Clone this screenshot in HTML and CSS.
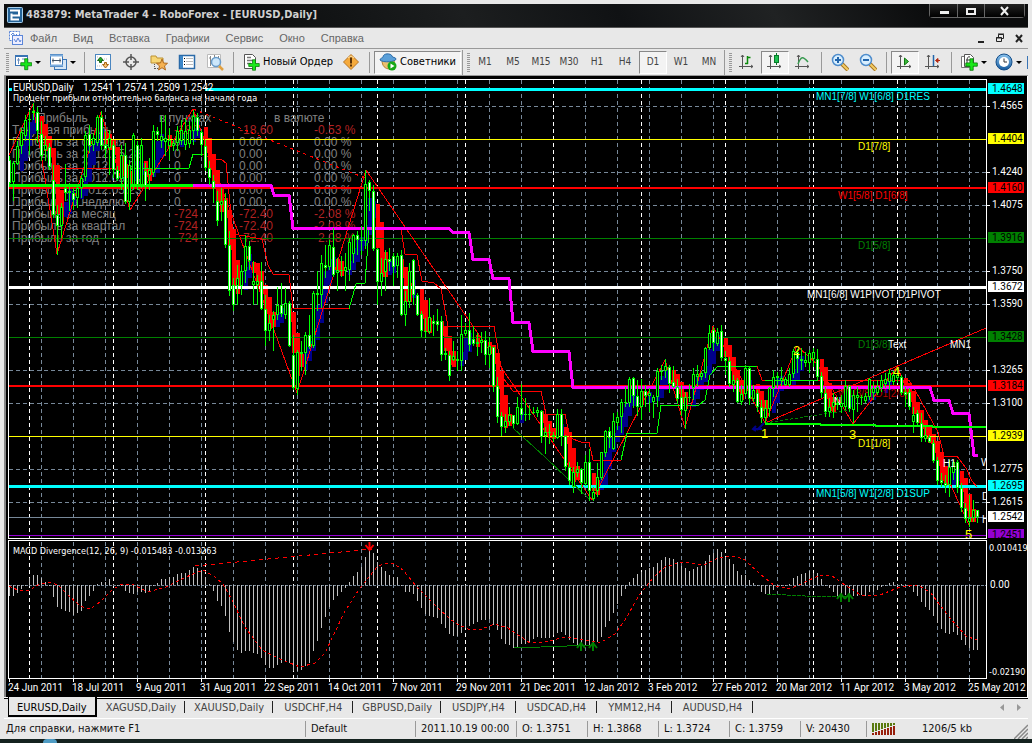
FILE: index.html
```html
<!DOCTYPE html>
<html lang="ru">
<head>
<meta charset="utf-8">
<title>483879: MetaTrader 4 - RoboForex - [EURUSD,Daily]</title>
<link rel="stylesheet" href="styles.css">
</head>
<body>
<svg class="defs" width="0" height="0" aria-hidden="true">
  <defs>
    <g id="plus"><path d="M6 1h4v5h5v4h-5v5H6v-5H1V6h5z" fill="#18e818" stroke="#087808"/></g>
    <g id="axes"><path d="M4.500 2v14M1 13.500h14M3 4l1.500-2L6 4M13 12l2 1.500-2 1.500" fill="none" stroke="#555"/></g>
    <linearGradient id="blue" x2="0" y2="1"><stop stop-color="#8cc4ee"/><stop offset="1" stop-color="#155a9e"/></linearGradient>
  </defs>
</svg>
<div class="window">
  <header class="titlebar">
    <svg class="logo" viewBox="0 0 16 16"><rect x=".5" y=".5" width="15" height="15" rx="1" fill="#246398" stroke="#a8d0ec"/><path d="M3 3.500h9v5H8M4.500 6.500v6H12M4 8.500h4" fill="none" stroke="#fff" stroke-width="2"/></svg>
    <h1>483879: MetaTrader 4 - RoboForex - [EURUSD,Daily]</h1>
    <div class="winbuttons">
      <button aria-label="Свернуть"><svg width="12" height="10"><rect x="2" y="5" width="9" height="3" fill="#eee"/></svg></button>
      <button aria-label="Развернуть"><svg width="12" height="10"><path d="M2 3h8v5H2z" fill="none" stroke="#eee" stroke-width="2"/></svg></button>
      <button aria-label="Закрыть" class="wide"><svg width="12" height="10"><path d="M2 1l7 8M9 1L2 9" stroke="#eee" stroke-width="2"/></svg></button>
    </div>
  </header>

  <nav class="menubar">
    <svg class="menuicon" viewBox="0 0 16 16"><rect x="1.500" y="1.500" width="10" height="9" fill="#fff" stroke="#5b86d8" stroke-dasharray="2 1"/><path d="M3 5l2-2 2 3 2-2" fill="none" stroke="#5b86d8"/><rect x="4.500" y="5.500" width="10" height="9" fill="#eef" stroke="#5b86d8"/><path d="M6 9l2 3 2-4 2 4 1-2" fill="none" stroke="#5b86d8"/></svg>
    <button>Файл</button><button>Вид</button><button>Вставка</button><button>Графики</button><button>Сервис</button><button>Окно</button><button>Справка</button>
    <div class="childbuttons">
      <button aria-label="Свернуть окно"><svg width="10" height="10"><rect x="2" y="8" width="6" height="2" fill="#222"/></svg></button>
      <button aria-label="Восстановить окно"><svg width="10" height="10"><path d="M3.500 4V1.500h5v4H7M3 1h6M1 5h6M1.500 4.500h5v4h-5z" fill="none" stroke="#222"/></svg></button>
      <button aria-label="Закрыть окно"><svg width="10" height="10"><path d="M2 2l6 7M8 2L2 9" stroke="#222" stroke-width="2"/></svg></button>
    </div>
  </nav>

  <div class="toolbar">
    <span class="grip"></span>
    <button class="drop" aria-label="Новый график"><svg viewBox="0 0 18 18"><rect x="1.500" y="2.500" width="12" height="10" fill="#fff" stroke="#3974b5"/><path d="M1 3h13" stroke="#3974b5" stroke-width="2"/><path d="M4.500 5v6M3 7h3M8 6h3" stroke="#6a8dbb"/><use href="#plus" transform="translate(6 5) scale(.78)"/></svg><i class="caret"></i></button>
    <button class="drop" aria-label="Профили"><svg viewBox="0 0 18 18"><rect x="5.500" y="6.500" width="12" height="10" fill="#d6e6f5" stroke="#3974b5"/><rect x="1.500" y="1.500" width="12" height="12" fill="#fff" stroke="#3974b5"/><path d="M1 2.500h13M1 12.500h13" stroke="#7faede" stroke-width="2"/><path d="M3 7.500h9M4 5.500v4M11 5.500v4" stroke="#456"/></svg><i class="caret"></i></button>
    <span class="sep"></span>
    <button aria-label="Обзор рынка"><svg viewBox="0 0 18 18"><rect x="1.500" y="1.500" width="15" height="15" fill="#fff" stroke="#4a86c0"/><path d="M3 4h2M10 6h4M3 13h5" stroke="#bbb" stroke-dasharray="1 1"/><path d="M3.500 7.500L6.500 4l3 3.500h-2v2h-2v-2z" fill="#27a327" stroke="#176717"/><path d="M8.500 11.500h2v-2h2v2h2l-3 3.500z" fill="#f8c070" stroke="#a66411"/></svg></button>
    <button aria-label="Окно данных"><svg viewBox="0 0 18 18"><circle cx="9" cy="9" r="5" fill="none" stroke="#555" stroke-width="1.500"/><path d="M9 1v6M9 11v6M1 9h6M11 9h6" stroke="#555" stroke-width="1.500"/></svg></button>
    <button aria-label="Навигатор"><svg viewBox="0 0 18 18"><path d="M1 3h5l1 2h6v5H1z" fill="#f7d674" stroke="#bd9233"/><path d="M4.500 11v6M5 15.500h3" stroke="#555" stroke-dasharray="1 1"/><path d="M12 6l1.500 4 4 .3-3 2.600 1 4.100-3.500-2.300L8.500 17l1-4.100-3-2.600 4-.3z" fill="#f6b252" stroke="#b06a20"/></svg></button>
    <button aria-label="Терминал"><svg viewBox="0 0 18 18"><rect x="1.500" y="2.500" width="15" height="13" fill="#fff" stroke="#2a6aa8" stroke-width="1.500"/><path d="M3.500 3v12" stroke="#3b86c8" stroke-width="3"/><path d="M8 5.500h7M8 8.500h7M8 11.500h7" stroke="#bbb"/><path d="M6 5.500h1M6 8.500h1M6 11.500h1" stroke="#000"/></svg></button>
    <button aria-label="Тестер стратегий"><svg viewBox="0 0 18 18"><path d="M1.500 1.500h13v13h-13z" fill="#fff" stroke="#bbb"/><path d="M4.500 3v10M3 5h2M8.500 2v4M12.500 3v5" stroke="#888"/><circle cx="10" cy="9" r="4.500" fill="#cce7fb" stroke="#689cca" stroke-width="1.500"/><path d="M13 13l4 4" stroke="#e0a040" stroke-width="2.500"/></svg></button>
    <span class="sep"></span>
    <button class="labelled"><svg viewBox="0 0 18 18"><path d="M2.500 1.500h8l3 3v11h-11z" fill="#fff" stroke="#555"/><path d="M5 4.500h4M5 7.500h6M5 10.500h4" stroke="#777" stroke-width="1.500"/><use href="#plus" transform="translate(6 6) scale(.75)"/></svg>Новый Ордер</button>
    <button aria-label="Редактор"><svg viewBox="0 0 18 18"><path d="M9 1.500L16.500 9 9 16.500 1.500 9z" fill="#f5aa3c" stroke="#b87422"/><path d="M6 5l3-2 3 2" stroke="#ffe0a0" fill="none"/><path d="M9 4.500v6M9 11.500v2" stroke="#5a3208" stroke-width="2"/></svg></button>
    <span class="sep"></span>
    <button class="labelled pressed" aria-pressed="true"><svg viewBox="0 0 18 18"><path d="M3 7c0 6 3 9 8 9s5-6 4-9z" fill="#edc06f" stroke="#b58030"/><path d="M1 7c0-2 3-2 3-3 0-4 8-4 9-1 0 2 4 1 4 3 0 3-13 4-16 1z" fill="#5a9fd8" stroke="#2c6ca8"/><circle cx="13" cy="13" r="4.500" fill="#16a816"/><path d="M11.500 10.500v5l4-2.500z" fill="#fff"/></svg>Советники</button>
    <span class="sep edge"></span><span class="grip"></span>
    <button class="tf">M1</button><button class="tf">M5</button><button class="tf">M15</button><button class="tf">M30</button><button class="tf">H1</button><button class="tf">H4</button><button class="tf pressed" aria-pressed="true">D1</button><button class="tf">W1</button><button class="tf">MN</button>
    <span class="sep edge"></span><span class="grip"></span>
    <button aria-label="Бары"><svg viewBox="0 0 18 18"><use href="#axes"/><path d="M9.500 3v8M9.500 4.500h3M7 10.500h3" stroke="#0a8a0a" stroke-width="1.500"/></svg></button>
    <button class="pressed" aria-pressed="true" aria-label="Свечи"><svg viewBox="0 0 18 18"><use href="#axes"/><path d="M10.500 0v12" stroke="#087a2a"/><rect x="8.500" y="2.500" width="4" height="7" fill="#1fc050" stroke="#087a2a"/></svg></button>
    <button aria-label="Линия"><svg viewBox="0 0 18 18"><use href="#axes"/><path d="M4 11C7 3 9 3 14 9" fill="none" stroke="#389a50" stroke-width="1.500"/></svg></button>
    <span class="sep"></span>
    <button aria-label="Приблизить"><svg viewBox="0 0 18 18"><path d="M11 11l6 6" stroke="#a87520" stroke-width="4"/><path d="M11 11l6 6" stroke="#f3cc65" stroke-width="2"/><circle cx="7" cy="7" r="5.500" fill="#d9efff" stroke="#4f8dcc" stroke-width="1.500"/><path d="M4 7h6M7 4v6" stroke="#2366ac" stroke-width="2"/></svg></button>
    <button aria-label="Отдалить"><svg viewBox="0 0 18 18"><path d="M11 11l6 6" stroke="#a87520" stroke-width="4"/><path d="M11 11l6 6" stroke="#f3cc65" stroke-width="2"/><circle cx="7" cy="7" r="5.500" fill="#d9efff" stroke="#4f8dcc" stroke-width="1.500"/><path d="M4 7h6" stroke="#2366ac" stroke-width="2"/></svg></button>
    <span class="sep"></span>
    <button class="pressed" aria-pressed="true" aria-label="Автопрокрутка"><svg viewBox="0 0 18 18"><use href="#axes"/><path d="M8.500 5v7l4-3.500z" fill="#3cb83c" stroke="#107a10"/></svg></button>
    <button aria-label="Сдвиг графика"><svg viewBox="0 0 18 18"><use href="#axes"/><path d="M9.500 2v11" stroke="#2366ac" stroke-width="1.500"/><path d="M16 7.500h-3M14 5.500l-2.500 2 2.500 2z" fill="#b32810" stroke="#b32810"/></svg></button>
    <span class="sep"></span>
    <button class="drop" aria-label="Индикаторы"><svg viewBox="0 0 18 18"><path d="M1.500 3.500h8v11h-8z" fill="#fff" stroke="#777"/><path d="M4.500 1.500h6l3 3v9h-9z" fill="#fff" stroke="#555"/><path d="M10 4c-3-1-3 2-3 7M6 7h4" fill="none" stroke="#333"/><use href="#plus" transform="translate(5 5) scale(.82)"/></svg><i class="caret"></i></button>
    <button class="drop" aria-label="Периоды"><svg viewBox="0 0 18 18"><circle cx="9" cy="9" r="8" fill="url(#blue)" stroke="#134d89"/><circle cx="9" cy="9" r="5" fill="#fff"/><path d="M9 5.500V9h3" fill="none" stroke="#333"/></svg><i class="caret"></i></button>
    <span class="more"></span>
  </div>

  <main class="chart">
    <svg id="chart" viewBox="4 76 1024 621" role="img" aria-label="График EURUSD, Daily"></svg>
  </main>

  <div class="tabs" role="tablist">
    <button role="tab" class="active" aria-selected="true">EURUSD,Daily</button><button role="tab">XAGUSD,Daily</button><button role="tab">XAUUSD,Daily</button><button role="tab" class="short">USDCHF,H4</button><button role="tab">GBPUSD,Daily</button><button role="tab" class="short">USDJPY,H4</button><button role="tab" class="short">USDCAD,H4</button><button role="tab" class="short">YMM12,H4</button><button role="tab" class="short">AUDUSD,H4</button>
    <div class="scrollers">
      <button aria-label="Назад"><svg width="5" height="7"><path d="M4 0v7L0 3.500z" fill="#999"/></svg></button>
      <button aria-label="Вперёд"><svg width="5" height="7"><path d="M0 0v7l4-3.500z" fill="#999"/></svg></button>
    </div>
  </div>

  <footer class="status">
    <span class="help">Для справки, нажмите F1</span>
    <span class="profile">Default</span>
    <span class="date">2011.10.19 00:00</span>
    <span class="val">O: 1.3751</span>
    <span class="val">H: 1.3868</span>
    <span class="val">L: 1.3724</span>
    <span class="val">C: 1.3759</span>
    <span class="vol">V: 20430</span>
    <span class="net"><svg width="24" height="13" id="net"></svg>1206/5 kb</span>
    <svg class="sizer" width="14" height="16"><path d="M0 16L14 2M4 16L14 6M8 16l6-6M12 16l2-2" stroke="#888" stroke-width="1.500"/></svg>
  </footer>
</div>
<div class="desktop"><span></span></div>
<script src="chart.js"></script>
</body>
</html>
```

FILE: styles.css
```css
* { box-sizing: border-box; }
body {
  margin: 0;
  background: #e8e8e8;
  font: 11px/14px "DejaVu Sans Condensed", "DejaVu Sans", sans-serif;
  color: #111;
}
.defs { position: absolute; }
button {
  font: inherit;
  color: inherit;
  background: none;
  border: 0;
  padding: 0;
  display: flex;
  align-items: center;
  justify-content: center;
}
svg { flex: none; }
.window { margin: 4px 4px 0; }

.titlebar {
  display: flex;
  align-items: center;
  height: 24px;
  padding: 0 3px 1px;
  background: linear-gradient(60deg, #0c0e0f 25%, #1c1e1f 45%, #101214 60%, #202223 75%, #0b0c0d 90%);
  border-bottom: 1px solid #555;
}
.logo { width: 16px; height: 16px; }
.titlebar h1 {
  margin: 0 0 0 3px;
  font: bold 11px/16px "DejaVu Sans Condensed", sans-serif;
  color: #d0d0d0;
  white-space: nowrap;
}
.winbuttons {
  display: flex;
  align-self: flex-start;
  margin-left: auto;
  border: 1px solid #666;
  border-top: 0;
  border-radius: 0 0 4px 4px;
}
.winbuttons button {
  width: 27px;
  height: 13px;
  background: linear-gradient(#222, #000);
}
.winbuttons button + button { border-left: 1px solid #666; }
.winbuttons .wide { width: 40px; }

.menubar {
  display: flex;
  align-items: center;
  height: 21px;
  padding-left: 4px;
  border-bottom: 1px solid #999;
  font: 11px/16px "Liberation Sans", sans-serif;
  color: #666;
}
.menuicon { width: 16px; height: 16px; margin-right: 6px; }
.menubar > button { margin-right: 16px; }
.childbuttons { display: flex; gap: 9px; margin: 0 4px 0 auto; }

.toolbar {
  display: flex;
  align-items: center;
  height: 27px;
  border-bottom: 1px solid #999;
  overflow: hidden;
}
.toolbar button { width: 28px; height: 23px; flex: none; }
.toolbar svg { width: 18px; height: 18px; }
.toolbar .drop { width: 35px; gap: 3px; }
.toolbar .tf { color: #444; font-size: 10px; }
.toolbar .labelled { width: auto; padding: 0 4px; gap: 3px; color: #000; }
.toolbar .pressed {
  border: 1px solid #888;
  border-right-color: #fff;
  border-bottom-color: #fff;
  background: #f3f3f3;
}
.caret { border: 3px solid transparent; border-top-color: #000; border-bottom: 0; }
.sep { width: 1px; height: 21px; margin: 0 4px; background: #999; flex: none; }
.sep.edge { height: 25px; margin: 0 2px 0 1px; }
.grip {
  width: 3px;
  height: 19px;
  margin: 0 1px 0 2px;
  flex: none;
  background: repeating-linear-gradient(#999 0 1px, #e8e8e8 1px 2px);
}
.more { width: 1px; height: 13px; margin-left: auto; background: #3974b5; flex: none; }

.chart { background: #000; }
.chart svg { display: block; width: 100%; height: auto; }
.chart text { font-family: Roboto, sans-serif; font-size: 10px; }
.chart .small { font-family: "DejaVu Sans Condensed", sans-serif; font-size: 9px; }
.chart .ar { font-family: "Liberation Sans", sans-serif; font-size: 10px; }
.chart .profit { font-family: "Liberation Sans", sans-serif; font-size: 12px; }
.chart .num { font-family: "Liberation Sans", sans-serif; font-size: 13px; }

.tabs {
  display: flex;
  height: 21px;
  padding-left: 4px;
  color: #444;
  background: linear-gradient(#fff 0 1px, #000 1px 2px, #e8e8e8 2px);
}
.tabs > button {
  position: relative;
  height: 20px;
  padding: 2px 9px 0;
}
.tabs > .short { padding: 2px 11px 0; }
.tabs > button:not(.active)::after {
  content: "";
  position: absolute;
  right: 0;
  top: 4px;
  height: 12px;
  border-right: 1px solid #222;
}
.tabs > .active {
  color: #000;
  border: solid #000;
  border-width: 0 2px 2px 1px;
  padding: 3px 8px 0;
  background: #e8e8e8;
}
.scrollers { display: flex; gap: 12px; margin: 0 6px 0 auto; }

.status {
  display: flex;
  align-items: center;
  height: 21px;
  border-top: 1px solid #fff;
  white-space: nowrap;
}
.status span { padding-left: 5px; line-height: 16px; }
.status span + span { border-left: 1px solid #999; }
.status .help { flex: 1; padding-left: 2px; }
.status .profile { width: 110px; }
.status .date { width: 101px; }
.status .val { width: 71px; }
.status .vol { width: 66px; }
.status .net { display: flex; align-items: center; gap: 26px; width: 148px; }
.status .sizer { align-self: flex-end; }
.desktop { height: 4px; background: #14221f; }
.desktop span { display: block; width: 14px; height: 4px; margin-left: 43px; background: #4f9cc4; border-radius: 7px 7px 0 0; }
```

FILE: chart.js
```js
const NS = 'http://www.w3.org/2000/svg';
const svg = document.getElementById('chart');
let layer = svg;

function add(tag, attrs, text) {
  const el = document.createElementNS(NS, tag);
  for (const k in attrs) el.setAttribute(k, attrs[k]);
  if (text !== undefined) el.textContent = text;
  layer.appendChild(el);
  return el;
}
const rect = (x, y, width, height, fill) => add('rect', { x, y, width, height, fill });
const line = (points, stroke, w = 1, dash) => add('polyline', {
  points, stroke, fill: 'none', 'stroke-width': w,
  ...(dash ? { 'stroke-dasharray': dash } : {}), 'shape-rendering': 'crispEdges'
});
const text = (x, y, s, fill = '#fff', cls = '') => add('text', { x, y, fill, class: cls }, s);

/* candles: high, body top, body bottom, low in thirds of a pixel below `top`; d marks a falling bar */
const parts = [
  [0, 78, `235 245 315 325 d|248 255 312 370|188 203 258 262|150 163 205 228|110 125 175 190|95 122 125 230|75 100 105 125|88 102 160 195 d|130 168 235 248 d|175 200 215 250|195 208 268 275 d|262 305 410 420 d|380 412 445 530 d|375 388 445 480|258 330 345 370 d|315 340 345 400|330 345 365 395 d|320 330 360 390|290 300 330 360|160 172 298 310|140 168 205 225 d|165 180 200 220|112 118 195 205|100 117 205 215 d|160 200 212 240 d|155 180 210 290|190 200 275 300 d|265 275 302 310 d|200 232 302 335|195 232 372 378 d|245 260 372 395|165 172 320 335|188 202 320 335 d|180 200 320 330|255 280 325 370 d|240 275 290 335|140 158 285 298|148 160 172 190 d|115 175 190 210|110 180 192 235|150 185 205 245|185 195 205 220|145 160 195 220|125 155 190 200|120 158 200 215|130 155 198 210|95 115 160 200|105 118 160 175 d|155 162 200 235 d|185 205 270 280 d|250 270 300 320 d|290 310 330 375 d|340 370 430 445 d|330 370 380 430|345 365 500 510 d|460 500 640 655 d|600 620 680 700 d|560 600 625 680|560 580 625 650|470 505 580 615|490 505 550 575 d`],
  [61, 78, `550 608 620 680|590 610 620 680|552 610 692 695 d|650 692 758 805 d|710 735 758 790|700 710 725 818|628 682 712 725|615 680 708 718 d|630 675 710 722|670 676 803 808 d|770 830 930 935 d|815 822 932 950|790 822 828 880|762 770 825 890|712 772 808 812 d|640 645 803 810|580 645 652 700|530 555 650 690|500 560 570 600 d|485 502 568 575|450 508 590 598 d|540 575 585 640|535 575 580 598|525 566 578 640|480 492 575 610|468 472 528 555|460 470 485 530 d|445 485 490 530|275 317 490 512|305 312 340 400 d|322 338 512 520 d|510 514 612 680 d|540 585 612 655|515 542 582 640|510 542 552 580 d|525 535 567 625 d|525 535 565 600|515 532 710 715 d|640 670 712 745|555 580 672 690|542 545 650 680 d|645 652 710 715 d|700 708 758 778 d|720 758 762 780|660 718 762 768|712 728 738 775 d|692 730 742 758 d|715 730 830 850 d|810 825 832 845|820 832 895 910 d|790 835 845 850|820 844 848 878|712 768 848 880|735 757 768 775|705 757 800 820 d|745 782 797 803 d|765 792 797 835`],
  [118, 300, `95 120 130 160|92 120 165 195 d|110 138 165 205|140 142 258 275 d|230 258 350 370 d|335 348 382 408 d|342 362 382 400|320 345 365 378|345 346 373 383 d|290 320 373 376|252 325 345 360 d|295 342 345 362|315 342 346 360|320 336 340 342|322 330 338 350|330 332 410 430 d|382 395 408 462|372 396 399 432|395 405 412 425 d|328 343 415 418|328 343 410 438 d|405 408 502 512 d|485 502 543 556 d|500 515 560 578|485 507 518 530|505 507 550 582 d|465 487 553 558|448 487 572 602 d|560 577 597 603|490 532 573 590|455 457 535 540|390 392 458 470|380 392 415 445 d|340 364 448 450|335 352 368 390|298 307 352 400|262 305 308 320|230 238 308 320|230 235 287 325 d|240 287 322 348 d|238 274 322 360|255 274 287 320 d|265 278 288 335|285 292 305 355|205 213 292 320|195 212 216 240|178 198 214 235|195 200 252 280 d|198 247 262 265 d|238 260 296 312 d|255 292 330 348 d|275 292 333 388|252 290 294 305|205 222 265 300|195 223 230 260|212 220 232 240|140 145 220 235|75 100 145 150|80 90 130 152 d|85 95 133 138|75 93 175 183 d|152 175 183 225 d|170 183 253 262 d`],
  [181, 310, `195 210 225 245|205 210 275 280 d|225 253 275 285|165 175 253 258|172 175 268 285 d|225 240 268 275|240 250 290 305 d|270 290 325 340 d|270 295 325 340|230 233 297 320|180 200 233 260|185 198 205 235|170 205 212 228|200 208 225 228|175 192 225 230|118 122 192 205|118 125 148 190 d|115 148 152 180|125 150 160 170|120 130 160 190|115 125 148 170|118 148 200 210 d|185 198 248 265 d|230 250 305 320 d|265 290 305 320|250 275 290 325|260 280 285 300|255 278 290 310|210 228 290 300|225 228 298 305 d|240 255 300 340|230 255 265 305|255 260 265 285|250 258 272 280|205 208 262 270|215 235 250 270|210 232 248 255|195 210 235 245|190 208 222 235|178 190 215 240|182 195 215 225|170 195 205 220|195 200 248 255 d|230 245 255 290 d|235 245 292 300 d|290 315 335 370|300 310 340 350 d|310 340 385 395 d|350 375 388 395|375 380 395 400 d|390 400 452 460 d|440 450 512 525 d|490 510 520 530 d|495 520 528 550 d|450 470 525 560|450 455 490 510|450 455 535 550 d|520 535 595 605 d|580 595 628 640 d|555 625 635 650|570 600 625 635|600 600 622 640 d`]
];
const bars = [];
for (const [start, top, data] of parts) {
  data.split('|').forEach((s, k) => {
    const f = s.split(' ');
    const [h, t, b, l] = f.slice(0, 4).map(v => Math.round(top + v / 3));
    bars[start + k] = { x: 9 + 4 * (start + k), h, t, b, l, down: f[4] === 'd' };
  });
}

/* grid */
rect(4, 76, 1024, 621, '#000');
rect(4, 76, 2, 621, '#888');
const GREY = '#778899';
const GRID_DASH = '4 3';
for (let x = 41.5; x < 986; x += 32) {
  line(`${x},80 ${x},538`, GREY, 1, GRID_DASH);
  line(`${x},542 ${x},678`, GREY, 1, GRID_DASH);
}
[106.5, 172.5, 205.5, 271.5, 304.5, 370.5, 403.5, 469.5, 502.5].forEach(y => line(`9,${y} 986,${y}`, GREY, 1, GRID_DASH));
[29.5, 113.5, 205.5, 293.5, 377.5, 465.5, 553.5, 641.5, 725.5, 813.5, 897.5].forEach(x => {
  line(`${x},80 ${x},538`, '#fff', 1, GRID_DASH);
  line(`${x},542 ${x},678`, '#fff', 1, GRID_DASH);
});

/* profit table */
const DIM = '#808080', RED = '#b22222';
text(37, 122, 'Прибыль', DIM, 'profit');
text(159, 122, 'в пунктах', DIM, 'profit');
text(274, 122, 'в валюте', DIM, 'profit');
[['Текущая прибыль', '-186', '-18.60', '-0.53 %'],
 ['Прибыль за сегодня', '0', '0.00', '0.00 %'],
 ['Прибыль за 2012.05.28', '0', '0.00', '0.00 %'],
 ['Прибыль за 2012.05.25', '0', '0.00', '0.00 %'],
 ['Прибыль за 2012.05.24', '0', '0.00', '0.00 %'],
 ['Прибыль за 2012.05.23', '0', '0.00', '0.00 %'],
 ['Прибыль за неделю', '0', '0.00', '0.00 %'],
 ['Прибыль за месяц', '-724', '-72.40', '-2.08 %'],
 ['Прибыль за квартал', '-724', '-72.40', '-2.08 %'],
 ['Прибыль за год', '-724', '-72.40', '-2.08 %']].forEach((r, k) => {
  const y = 134 + 12 * k, c = r[1][0] === '-' ? RED : DIM;
  text(12, y, r[0], DIM, 'profit');
  text(174, y, r[1], c, 'profit');
  text(239, y, r[2], c, 'profit');
  text(314, y, r[3], c, 'profit');
});

/* trend cloud */
const mid = b => (b.t + b.b) / 2;
bars.forEach((b, i) => {
  if (i < 3) return;
  const past = (mid(bars[i - 1]) + mid(bars[i - 2]) + mid(bars[i - 3])) / 3;
  const now = (mid(b) + mid(bars[i - 1])) / 2;
  if (Math.abs(now - past) < 4) return;
  const y1 = Math.round(Math.min(past, now)) - 2, y2 = Math.round(Math.max(past, now)) + 5;
  rect(b.x - 1, y1, 4, y2 - y1, now > past ? '#f00' : '#00008b');
});

/* horizontal levels */
[[88, 3, '#0ff'], [139, 1, '#ff0'], [187, 2, '#f00'], [238, 1, '#008000'], [286, 3, '#fff'], [337, 1, '#008000'],
 [385, 2, '#f00'], [436, 1, '#ff0'], [485, 3, '#0ff'], [517, 1, GREY], [535, 1, '#9400d3']].forEach(([y, h, c]) => rect(9, y, 977, h, c));

/* trailing stop, zigzag and trend lines */
line('9,155 33,104 57,254 101,112 130,210 193,109 297,393 366,170 592,500 665,360 685,428 713,326 765,423 797,346 818,365 853,424 897,367 969,525', '#f00');
line('193,109 240,128 365,178', '#f00', 1, '3 4');
line('58,168 130,168', '#f00');
line('130,168 189,168 193,154 203,154', '#0f0');
line('203,154 213,159 222,160 226,163 233,234 262,239 268,265 273,274 289,275 293,308 349,309', '#f00');
line('349,309 356,284 365,283 369,230', '#0f0');
line('369,230 401,229 405,254 417,255 422,281 434,283 441,289 448,326 494,326 503,378 513,391 541,391 546,414 565,414 570,438 581,442 589,442 593,460 621,460', '#f00');
line('621,460 627,433 657,433 661,405 699,405 705,400 710,375 718,366 757,366', '#0f0');
line('757,366 762,380 909,380 915,390 938,432 944,456 957,456 966,468 972,481 977,487', '#f00');
line('765,380 818,380', '#0f0');
line('765,423 986,328', '#f00');
line('765,423 850,410', '#008000', 1, '3 2');
line('513,428 545,457 590,500', '#008000');
line('193,185.5 271,185.5 274,195 289,195 293,228.5 449,228.5 453,232.5 469,232.5 473,259.5 489,259.5 493,278.5 509,278.5 513,322.5 529,322.5 533,351.5 569,351.5 573,387.5 930,387.5 934,400.5 949,400.5 953,413.5 969,413.5 974,455.5 978,455.5', '#f0f', 3);
line('9,185.5 193,185.5', '#0f0', 3);
line('765,424 820,424 821,425 875,425 876,426 932,426 933,427 986,427', '#0f0', 2);
text(838, 397, 'W1[3/8] D1[2/8]', '#b00', 'ar');
text(834, 405, 'N', '#fff', 'ar');

bars.forEach(b => {
  rect(b.x, b.h, 1, b.l - b.h, '#0f0');
  const h = Math.max(b.b - b.t, 1);
  rect(b.x - 1, b.t, 3, h, '#0f0');
  if (h > 2) rect(b.x, b.t + 1, 1, h - 2, b.down ? '#fff' : '#000');
});

/* level captions and marks */
text(816, 100, 'MN1[7/8] W1[6/8] D1RES', '#0ff', 'ar');
text(858, 150, 'D1[7/8]', '#ff0', 'ar');
text(838, 199, 'W1[5/8] D1[6/8]', '#f00', 'ar');
text(858, 249, 'D1[5/8]', '#008000', 'ar');
text(807, 298, 'MN1[6/8] W1PIVOT D1PIVOT', '#fff', 'ar');
text(858, 348, 'D1[3/8]', '#008000', 'ar');
text(858, 447, 'D1[1/8]', '#ff0', 'ar');
text(816, 497, 'MN1[5/8] W1[2/8] D1SUP', '#0ff', 'ar');
text(888, 348, 'Text', '#fff', 'ar');
text(950, 348, 'MN1', '#fff', 'ar');
text(943, 467, 'H1', '#fff', 'ar');
text(981, 466, 'W', '#fff', 'ar');
text(982, 500, 'D', '#fff', 'ar');
text(982, 523, 'H', '#fff', 'ar');
[[761, 438, '1'], [793, 355, '2'], [849, 439, '3'], [893, 376, '4'], [965, 539, '5']].forEach(([x, y, s]) => text(x, y, s, '#ff0', 'num'));
add('path', { d: 'M753 429h9M756 426l-3 3 3 2M757 430l7-7', fill: 'none', stroke: '#00008b', 'stroke-width': 2 });

/* sub-window and axis background */
rect(9, 538, 1018, 4, '#000');
rect(987, 77, 40, 620, '#000');
const zero = 585;
line(`9,${zero + .5} 986,${zero + .5}`, GREY, 1, '3 1');
const macd = '198 198 188 178 165 145 135 135 145 155 165 200 230 237 243 245 255 248 243 213 198 182 162 157 156 148 163 166 168 184 188 192 187 187 189 184 168 158 147 147 142 140 132 130 130 120 110 113 120 140 162 182 212 228 257 305 335 360 370 363 363 370 373 385 405 415 415 405 400 393 400 423 423 420 408 400 362 332 295 260 230 210 198 186 175 155 138 125 112 80 60 68 95 112 122 135 142 142 166 186 186 193 213 235 253 258 262 265 282 295 312 318 318 308 295 288 282 275 270 270 268 285 300 327 342 345 355 350 343 342 335 328 322 323 323 323 315 310 305 315 330 340 345 350 345 347 343 337 320 292 272 248 222 197 178 155 143 133 125 120 113 110 98 90 80 85 88 97 108 115 122 117 110 108 93 75 70 57 65 80 87 102 122 135 135 150 158 166 185 193 193 180 170 166 166 162 143 138 133 128 123 128 130 148 166 175 187 197 198 195 195 198 198 195 198 187 187 180 170 166 160 157 162 163 166 172 187 197 215 230 240 257 280 297 310 312 307 315 330 345 355 360 360';
macd.split(' ').forEach((v, i) => {
  const y = Math.round(530 + v / 3);
  rect(9 + 4 * i, Math.min(y, zero), 1, Math.max(Math.abs(y - zero), 1), '#c0c0c0');
});
line('9,586 20,591 30,590 40,584 50,582 58,585 65,592 80,606 90,609 100,602 112,590 122,584 132,584 148,592 166,587 186,577 203,570 215,577 223,584 232,600 245,627 262,650 280,659 300,667 315,663 325,653 345,611 360,588 377,567 385,563 393,563 403,570 416,586 438,608 455,623 468,629 482,629 495,624 508,628 530,643 545,642 565,637 590,641 600,643 615,634 625,620 640,594 653,578 665,567 682,562 704,565 718,558 735,556 745,560 760,574 775,586 790,589 803,583 820,575 832,576 845,585 862,596 880,595 900,587 917,585 930,592 950,618 966,636 977,640', '#f00', 1, '3 3');
line('195,566 372,549', '#f00', 1, '4 4');
line('514,648 594,645', '#008000');
line('767,594 805,596 850,597', '#008000', 1, '4 1');
[[581, 643], [593, 643], [841, 594], [849, 594]].forEach(([x, y]) =>
  add('path', { d: `M${x} ${y + 8}v-8m-4 5l4-5 4 5`, fill: 'none', stroke: '#008000', 'stroke-width': 2 }));
add('path', { d: 'M369.500 542v8m-4-5l4 5 4-5', fill: 'none', stroke: '#f00', 'stroke-width': 2 });

/* frames */
const frame = (y, h) => add('rect', { x: 8.5, y, width: 978, height: h, fill: 'none', stroke: '#fff', 'shape-rendering': 'crispEdges' });
frame(79.5, 459);
frame(540.5, 138);
rect(12, 82, 193, 10, '#000');
text(13, 91, 'EURUSD,Daily');
text(83, 91, '1.2541 1.2574 1.2509 1.2542');
text(13, 101, 'Процент прибыли относительно баланса на начало года', '#fff', 'small');
text(13, 554, 'MACD Divergence(12, 26, 9) -0.015483 -0.013263', '#fff', 'small');

/* price axis */
[[106, '1.4565'], [172, '1.4240'], [205, '1.4075'], [271, '1.3750'], [304, '1.3590'], [370, '1.3265'], [403, '1.3100'], [469, '1.2775'], [502, '1.2615']].forEach(([y, s]) => {
  rect(987, y, 3, 1, '#fff');
  text(992, y + 3, s);
});
[[89, '1.4648', '#0ff'], [139, '1.4404', '#ff0'], [188, '1.4160', '#f00'], [238, '1.3916', '#008000'], [287, '1.3672', '#fff'], [337, '1.3428', '#008000'],
 [386, '1.3184', '#f00'], [436, '1.2939', '#ff0'], [486, '1.2695', '#0ff'], [517, '1.2542', '#fff']].forEach(([y, s, c]) => {
  rect(988, y - 6, 36, 11, c);
  text(992, y + 3, s, '#000');
});
rect(988, 529, 36, 9, '#9400d3');
text(992, 538, '1.2451', '#000');
text(989, 551, '0.010419', '#fff', 'small');
text(990, 588, '0.00');
text(989, 675, '-0.02190', '#fff', 'small');

/* time axis */
['24 Jun 2011', '18 Jul 2011', '9 Aug 2011', '31 Aug 2011', '22 Sep 2011', '14 Oct 2011', '7 Nov 2011', '29 Nov 2011', '21 Dec 2011', '12 Jan 2012', '3 Feb 2012', '27 Feb 2012', '20 Mar 2012', '11 Apr 2012', '3 May 2012', '25 May 2012'].forEach((s, k) => {
  rect(9 + 64 * k, 679, 1, 3, '#fff');
  text(8 + 64 * k, 691, s);
});
rect(1027, 76, 1, 621, '#fff');

/* connection meter */
layer = document.getElementById('net');
for (let k = 0; k < 8; k++) {
  rect(k * 3, 0, 2, 9 - k, '#5a7a10');
  rect(k * 3, 10 - k, 2, 2 + k, '#98200c');
}
```
